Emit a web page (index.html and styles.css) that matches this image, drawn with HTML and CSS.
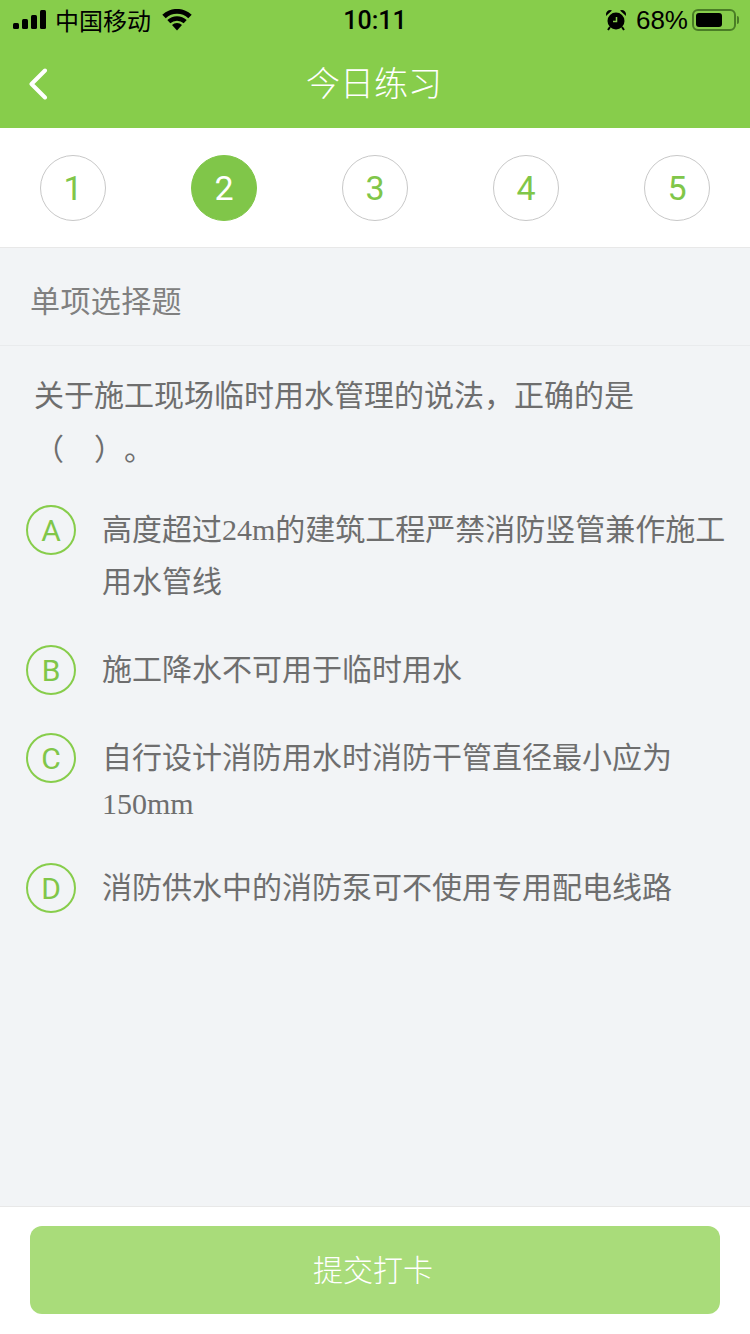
FILE: index.html
```html
<!DOCTYPE html>
<html lang="zh-CN">
<head>
    <meta charset="UTF-8">
    <meta name="viewport" content="width=device-width, initial-scale=1.0">
    <title>今日练习</title>
    <link rel="stylesheet" href="styles.css">
</head>
<body>
    <div class="app">
        <div class="top">
            <div class="status">
                <div class="status-left">
                    <svg class="signal" width="34" height="20" viewBox="0 0 34 20">
                        <rect x="0" y="13" width="6" height="6" rx="1.500"/>
                        <rect x="9" y="9" width="6" height="10" rx="1.500"/>
                        <rect x="18" y="5" width="6" height="14" rx="1.500"/>
                        <rect x="27" y="0" width="6" height="19" rx="1.500"/>
                    </svg>
                    <span class="carrier">中国移动</span>
                    <svg class="wifi" width="30" height="22" viewBox="0 0 30 22">
                        <path d="M15 21.500l-5-5.400a7 7 0 0 1 10 0z"/>
                        <path d="M8.300 14.300l-3-3.200a14.200 14.200 0 0 1 19.400 0l-3 3.200a9.800 9.800 0 0 0-13.400 0z"/>
                        <path d="M3.700 9.300L0.300 5.700a21.500 21.500 0 0 1 29.400 0l-3.400 3.600a16.600 16.600 0 0 0-22.600 0z"/>
                    </svg>
                </div>
                <div class="time">10:11</div>
                <div class="status-right">
                    <svg class="alarm" width="22" height="22" viewBox="0 0 22 22">
                        <circle cx="11" cy="12" r="8.500"/>
                        <path d="M1 7a4.500 4.500 0 0 1 6-5.500zM21 7a4.500 4.500 0 0 0-6-5.500z"/>
                        <path class="alarm-legs" d="M5 18l-2 3M17 18l2 3"/>
                        <path class="alarm-hand" d="M11.500 8v4.500H8"/>
                    </svg>
                    <span class="percent">68%</span>
                    <div class="battery"><div class="battery-fill"></div></div>
                    <div class="battery-nub"></div>
                </div>
            </div>
            <div class="nav">
                <svg class="back" width="20" height="32" viewBox="0 0 20 32">
                    <path d="M17 2.500L3.500 16 17 29.500"/>
                </svg>
                <div class="nav-title">今日练习</div>
            </div>
        </div>

        <div class="steps">
            <div class="step">1</div>
            <div class="step current">2</div>
            <div class="step">3</div>
            <div class="step">4</div>
            <div class="step">5</div>
        </div>

        <div class="main">
            <div class="section-title">单项选择题</div>
            <div class="question">关于施工现场临时用水管理的说法，正确的是<br>（　）。</div>
            <div class="options">
                <div class="option">
                    <div class="letter">A</div>
                    <div class="option-text">高度超过24m的建筑工程严禁消防竖管兼作施工用水管线</div>
                </div>
                <div class="option">
                    <div class="letter">B</div>
                    <div class="option-text">施工降水不可用于临时用水</div>
                </div>
                <div class="option">
                    <div class="letter">C</div>
                    <div class="option-text">自行设计消防用水时消防干管直径最小应为<span class="latin-line">150mm</span></div>
                </div>
                <div class="option">
                    <div class="letter">D</div>
                    <div class="option-text">消防供水中的消防泵可不使用专用配电线路</div>
                </div>
            </div>
        </div>

        <div class="footer">
            <button class="submit">提交打卡</button>
        </div>
    </div>
</body>
</html>
```

FILE: styles.css
```css
body {
    margin: 0;
    font-family: "Liberation Sans", "Noto Sans CJK SC", sans-serif;
    overflow: hidden;
}
.app {
    width: 750px;
    height: 1334px;
    display: flex;
    flex-direction: column;
    background-color: #f2f4f6;
}
.top {
    background-color: #87cd4b;
}
.status {
    height: 40px;
    display: grid;
    grid-template-columns: 1fr auto 1fr;
    align-items: center;
    color: #000;
    font-size: 24px;
}
.status-left {
    display: flex;
    align-items: center;
    padding-left: 13px;
}
.signal {
    fill: #000;
}
.carrier {
    margin-left: 8px;
    margin-bottom: 2px;
}
.wifi {
    margin-left: 11px;
    fill: #000;
}
.time {
    font-family: Roboto, sans-serif;
    font-weight: 500;
    font-size: 25px;
}
.status-right {
    display: flex;
    align-items: center;
    justify-content: flex-end;
    padding-right: 11px;
}
.alarm circle, .alarm > path:nth-of-type(1) {
    fill: #000;
}
.alarm-legs {
    fill: none;
    stroke: #000;
    stroke-width: 2;
}
.alarm-hand {
    fill: none;
    stroke: #87cd4b;
    stroke-width: 1.5;
}
.percent {
    margin-left: 9px;
    font-size: 26px;
}
.battery {
    width: 44px;
    height: 22px;
    margin-left: 4px;
    padding: 2px;
    box-sizing: border-box;
    border: 2px solid #4a7d26;
    border-radius: 6px;
}
.battery-fill {
    width: 26px;
    height: 100%;
    background-color: #000;
    border-radius: 3px;
}
.battery-nub {
    width: 2px;
    height: 8px;
    margin-left: 1px;
    background-color: #4a7d26;
    border-radius: 0 2px 2px 0;
}
.nav {
    height: 88px;
    display: flex;
    align-items: center;
    justify-content: center;
    position: relative;
}
.back {
    position: absolute;
    left: 28px;
    top: 28px;
    fill: none;
    stroke: #fff;
    stroke-width: 4;
    stroke-linecap: round;
    stroke-linejoin: round;
}
.nav-title {
    margin-right: 2px;
    color: #fff;
    font-size: 34px;
    font-weight: 300;
    line-height: 1;
}
.steps {
    height: 120px;
    box-sizing: border-box;
    background-color: #fff;
    border-bottom: 1px solid #e8e8e8;
    padding: 27px 40px 0;
    display: flex;
    justify-content: space-between;
    align-items: flex-start;
}
.step {
    width: 66px;
    height: 66px;
    box-sizing: border-box;
    border: 1px solid #c8c8c8;
    border-radius: 50%;
    display: flex;
    align-items: center;
    justify-content: center;
    color: #80c649;
    font-family: Roboto, sans-serif;
    font-size: 34px;
}
.step.current {
    background-color: #80c649;
    border-color: #80c649;
    color: #fff;
}
.main {
    flex: 1;
}
.section-title {
    height: 98px;
    box-sizing: border-box;
    border-bottom: 1px solid #e9ebed;
    padding: 4px 0 0 30px;
    display: flex;
    align-items: center;
    color: #808080;
    font-size: 30px;
    letter-spacing: 0.4px;
}
.question {
    padding: 23px 30px 0 34px;
    color: #6e6e6e;
    font-size: 30px;
    line-height: 54px;
    text-spacing-trim: space-all;
}
.options {
    margin-top: 27px;
    padding: 0 20px 0 26px;
    display: flex;
    flex-direction: column;
    gap: 36px;
}
.option {
    display: flex;
    align-items: flex-start;
}
.letter {
    flex: none;
    width: 50px;
    height: 50px;
    margin-top: 1px;
    box-sizing: border-box;
    border: 2px solid #87cd4b;
    border-radius: 50%;
    display: flex;
    align-items: center;
    justify-content: center;
    color: #80c649;
    font-family: Roboto, sans-serif;
    font-size: 30px;
}
.option-text {
    margin-left: 26px;
    color: #6e6e6e;
    font-family: "Liberation Serif", "Noto Sans CJK SC", serif;
    font-size: 30px;
    line-height: 52px;
}
.latin-line {
    display: block;
    line-height: 40px;
    padding-bottom: 2px;
}
.footer {
    height: 128px;
    box-sizing: border-box;
    background-color: #fff;
    border-top: 1px solid #e8e8e8;
    padding: 19px 30px 0;
}
.submit {
    display: block;
    width: 100%;
    height: 88px;
    padding: 0 4px 4px 0;
    border: none;
    border-radius: 12px;
    background-color: #a9dc7a;
    color: #fff;
    font-family: "Liberation Sans", "Noto Sans CJK SC", sans-serif;
    font-size: 30px;
    font-weight: 300;
}
```
